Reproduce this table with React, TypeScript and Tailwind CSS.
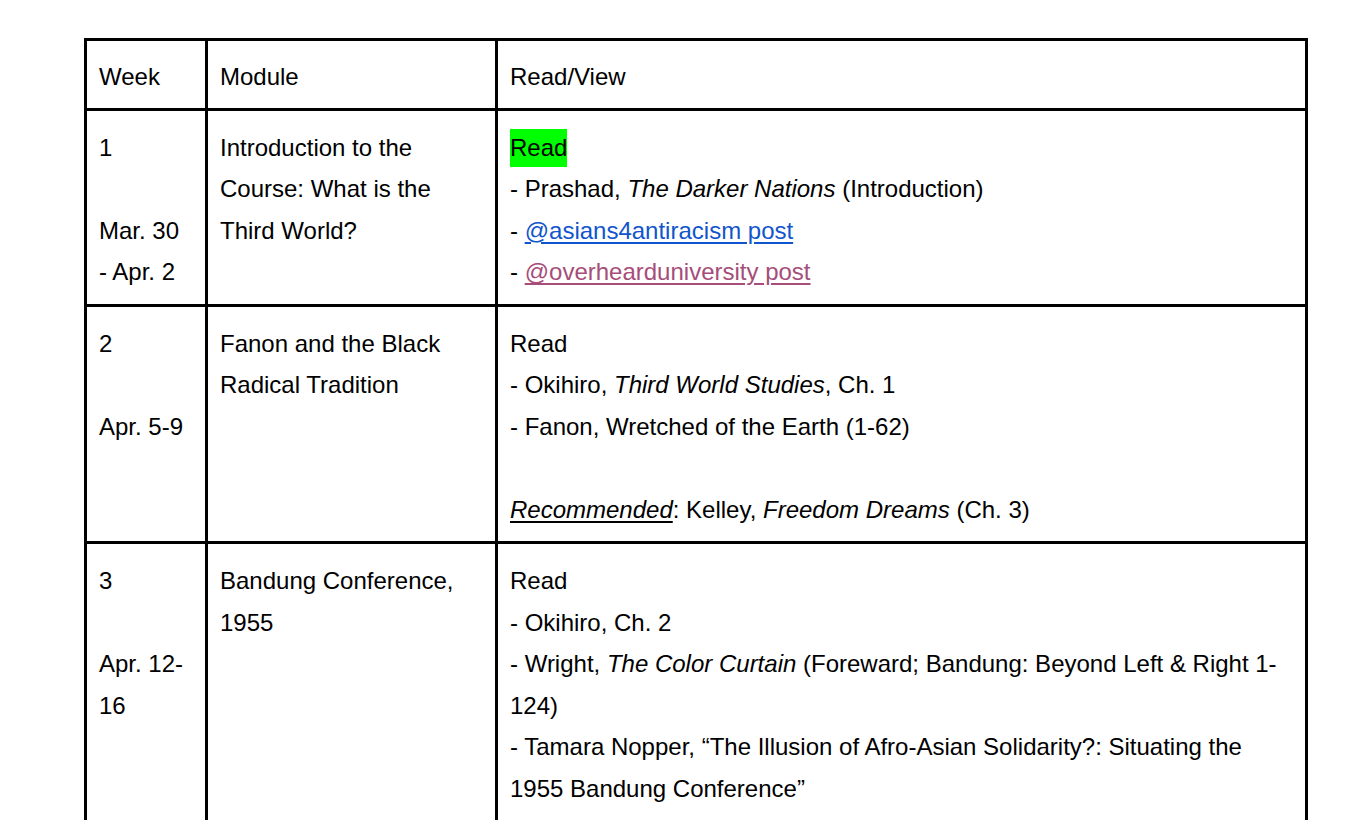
// App.tsx — course schedule table

type Row = {
  week: React.ReactNode;
  module: React.ReactNode;
  readings: React.ReactNode;
};

const Blank = () => <div className="h-[41.5px]" />;

const rows: Row[] = [
  {
    week: (
      <>
        <div>1</div>
        <Blank />
        <div>Mar. 30</div>
        <div>- Apr. 2</div>
      </>
    ),
    module: <div>Introduction to the Course: What is the Third World?</div>,
    readings: (
      <>
        <div>
          <span className="bg-[#00ff00] pt-[5px] pb-[6px]">Read</span>
        </div>
        <div>
          - Prashad, <i>The Darker Nations</i> (Introduction)
        </div>
        <div>
          - <a className="text-[#1155cc] underline underline-offset-[3px]">@asians4antiracism post</a>
        </div>
        <div>
          - <a className="text-[#a64d79] underline underline-offset-[3px]">@overhearduniversity post</a>
        </div>
      </>
    ),
  },
  {
    week: (
      <>
        <div>2</div>
        <Blank />
        <div>Apr. 5-9</div>
      </>
    ),
    module: <div>Fanon and the Black Radical Tradition</div>,
    readings: (
      <>
        <div>Read</div>
        <div>
          - Okihiro, <i>Third World Studies</i>, Ch. 1
        </div>
        <div>- Fanon, Wretched of the Earth (1-62)</div>
        <Blank />
        <div>
          <i className="underline underline-offset-[3px]">Recommended</i>: Kelley, <i>Freedom Dreams</i> (Ch. 3)
        </div>
      </>
    ),
  },
  {
    week: (
      <>
        <div>3</div>
        <Blank />
        <div>Apr. 12-</div>
        <div>16</div>
      </>
    ),
    module: <div>Bandung Conference, 1955</div>,
    readings: (
      <>
        <div>Read</div>
        <div>- Okihiro, Ch. 2</div>
        <div>
          - Wright, <i>The Color Curtain</i> (Foreward; Bandung: Beyond Left &amp; Right 1-
          <br />
          124)
        </div>
        <div>- Tamara Nopper, “The Illusion of Afro-Asian Solidarity?: Situating the 1955 Bandung Conference”</div>
      </>
    ),
  },
];

const cell = "border-r-[3px] border-b-[3px] border-black px-3";

export default function App() {
  return (
    <div className="min-h-screen bg-white pt-[38px] text-black font-['Liberation_Sans',Arial,sans-serif] text-[24px] leading-[41.5px]">
      <div className="ml-[84px] grid w-[1224px] grid-cols-[121px_290px_810px] border-l-[3px] border-t-[3px] border-black">
        {/* header */}
        <div className={`${cell} pt-[15px] pb-[10px]`}>Week</div>
        <div className={`${cell} pt-[15px] pb-[10px]`}>Module</div>
        <div className={`${cell} pt-[15px] pb-[10px]`}>Read/View</div>

        {rows.map((row, i) => (
          <div key={i} className="contents">
            <div className={`${cell} pt-4 pb-[11px]`}>{row.week}</div>
            <div className={`${cell} pt-4 pb-[11px]`}>{row.module}</div>
            <div className={`${cell} pt-4 pb-[11px]`}>{row.readings}</div>
          </div>
        ))}
      </div>
    </div>
  );
}
